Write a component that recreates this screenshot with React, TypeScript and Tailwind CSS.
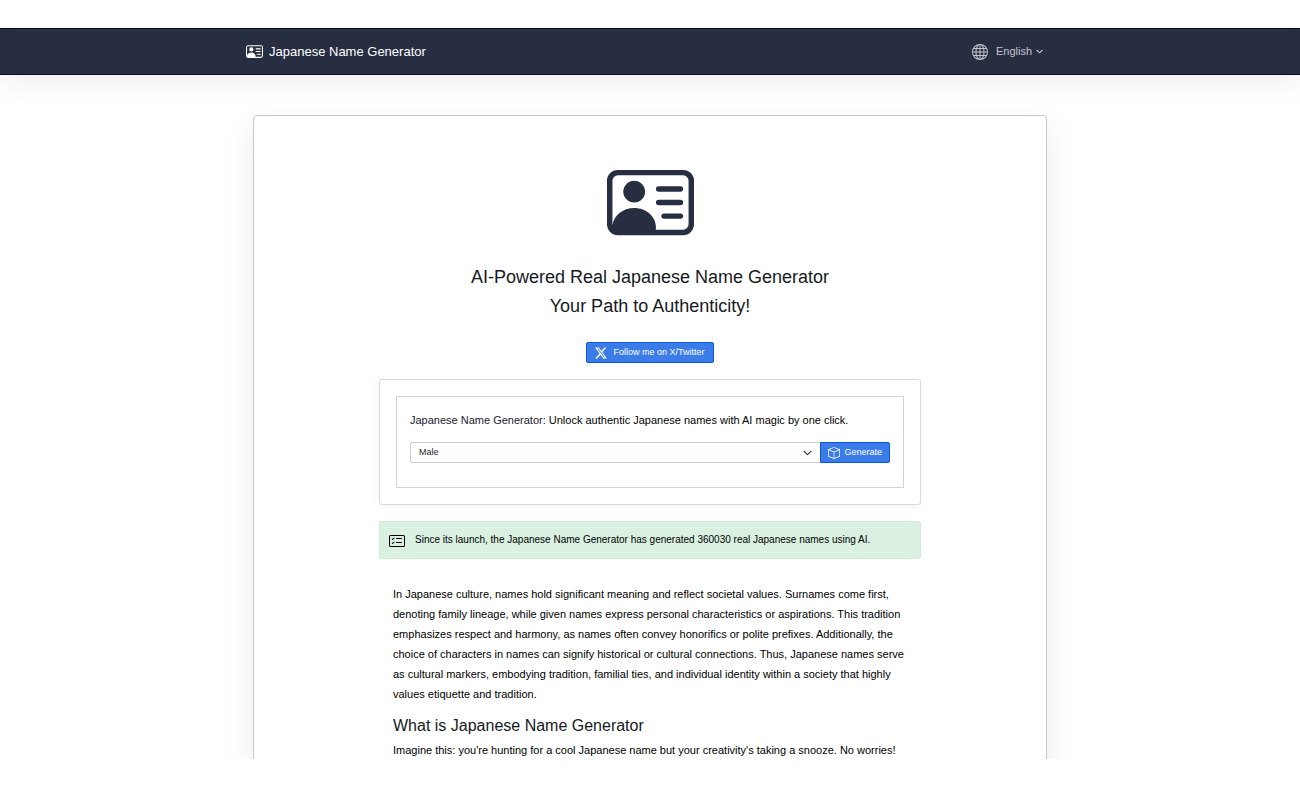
import React, { useState, FormEvent } from "react";
import { BsBox, BsCardChecklist, BsChevronDown, BsGlobe, BsPersonVcard, BsTwitterX } from "react-icons/bs";

function Header() {
  return (
    <header className="relative z-10 border-y border-[#0b0e1a] bg-[#282e42] shadow-[0_11px_22px_rgba(0,0,0,0.05)]">
      <nav className="mx-auto flex h-[45px] max-w-[808px] items-center justify-between">
        <a href="#" className="flex items-center gap-1.5 text-[13px] text-white">
          <BsPersonVcard className="size-[17px]" />
          Japanese Name Generator
        </a>
        <button type="button" className="mr-[11px] flex items-center text-[11px] text-[#c3c6cf]">
          <BsGlobe className="mr-2 size-4" />
          English
          <BsChevronDown className="ml-1 size-[7px] stroke-2" />
        </button>
      </nav>
    </header>
  );
}

function GeneratorForm() {
  const [gender, setGender] = useState("male");

  const handleSubmit = (e: FormEvent<HTMLFormElement>) => {
    e.preventDefault();
  };

  return (
    <div className="mt-4 rounded-[3px] border border-[#d3dce6] p-4 shadow-[0_1px_8px_rgba(0,0,0,0.05)]">
      <form onSubmit={handleSubmit} className="border border-[#ccd6e0] px-[13px] pt-[15px] pb-6">
        <label htmlFor="gender" className="block text-[11px] leading-4 text-black">
          <a href="#" className="text-[#1c2030]">Japanese Name Generator:</a> Unlock authentic Japanese names with AI magic by one click.
        </label>
        <div className="mt-3.5 flex h-[21px]">
          <div className="relative flex flex-1">
            <select
              id="gender"
              value={gender}
              onChange={(e) => setGender(e.target.value)}
              className="w-full appearance-none rounded-l-[3px] border border-r-0 border-[#c9d0d8] bg-white px-2 text-[9px] text-[#212529]"
            >
              <option value="male">Male</option>
              <option value="female">Female</option>
            </select>
            <BsChevronDown className="pointer-events-none absolute top-1/2 right-2 size-[9px] -translate-y-1/2 stroke-1 text-[#212529]" />
          </div>
          <button type="submit" className="flex items-center gap-1 rounded-r-[2px] border border-[#0b57e3] bg-[#3b7ce9] px-[7px] text-[9px] text-white">
            <BsBox className="size-3" />
            Generate
          </button>
        </div>
      </form>
    </div>
  );
}

export default function App() {
  return (
    <div className="flex h-screen flex-col bg-white pt-7 pb-[29px] font-['Liberation_Sans',Arial,sans-serif]">
      <Header />

      <main className="min-h-0 flex-1 overflow-hidden pt-10">
        <div className="mx-auto max-w-[794px] rounded-[4px] border border-[#c6c8ca] bg-white pt-[43px] pb-16 shadow-[0_11px_32px_rgba(0,0,0,0.08)]">
          <div className="mx-auto max-w-[542px]">
            <div className="flex flex-col items-center">
              <BsPersonVcard className="size-[87px] text-[#282e42]" />
              <h1 className="mt-[17px] text-center text-[18px] leading-[29px] text-[#16191d]">
                AI-Powered Real Japanese Name Generator
                <br />
                Your Path to Authenticity!
              </h1>
              <a href="#" className="mt-[21px] flex h-[21px] items-center gap-1.5 rounded-[2px] border border-[#0b57e3] bg-[#3b7ce9] px-2 text-[9px] text-white">
                <BsTwitterX className="size-3" />
                Follow me on X/Twitter
              </a>
            </div>

            <GeneratorForm />

            <div className="mt-4 flex h-[38px] gap-2.5 rounded-[2px] border border-[#cfecda] bg-[#daf1e2] px-[9px] text-black">
              <BsCardChecklist className="mt-[11px] size-4" />
              <p className="mt-2.5 text-[10px] leading-4">Since its launch, the Japanese Name Generator has generated 360030 real Japanese names using AI.</p>
            </div>

            <article className="mt-[25px] px-3.5 text-[11px] leading-5 text-black">
              <p>
                In Japanese culture, names hold significant meaning and reflect societal values. Surnames come first,
                denoting family lineage, while given names express personal characteristics or aspirations. This tradition
                emphasizes respect and harmony, as names often convey honorifics or polite prefixes. Additionally, the
                choice of characters in names can signify historical or cultural connections. Thus, Japanese names serve
                as cultural markers, embodying tradition, familial ties, and individual identity within a society that highly
                values etiquette and tradition.
              </p>
              <h2 className="mt-3 text-[16px] leading-5 text-[#16191d]">What is Japanese Name Generator</h2>
              <p className="mt-1">
                Imagine this: you're hunting for a cool Japanese name but your creativity's taking a snooze. No worries!
              </p>
            </article>
          </div>
        </div>
      </main>
    </div>
  );
}
